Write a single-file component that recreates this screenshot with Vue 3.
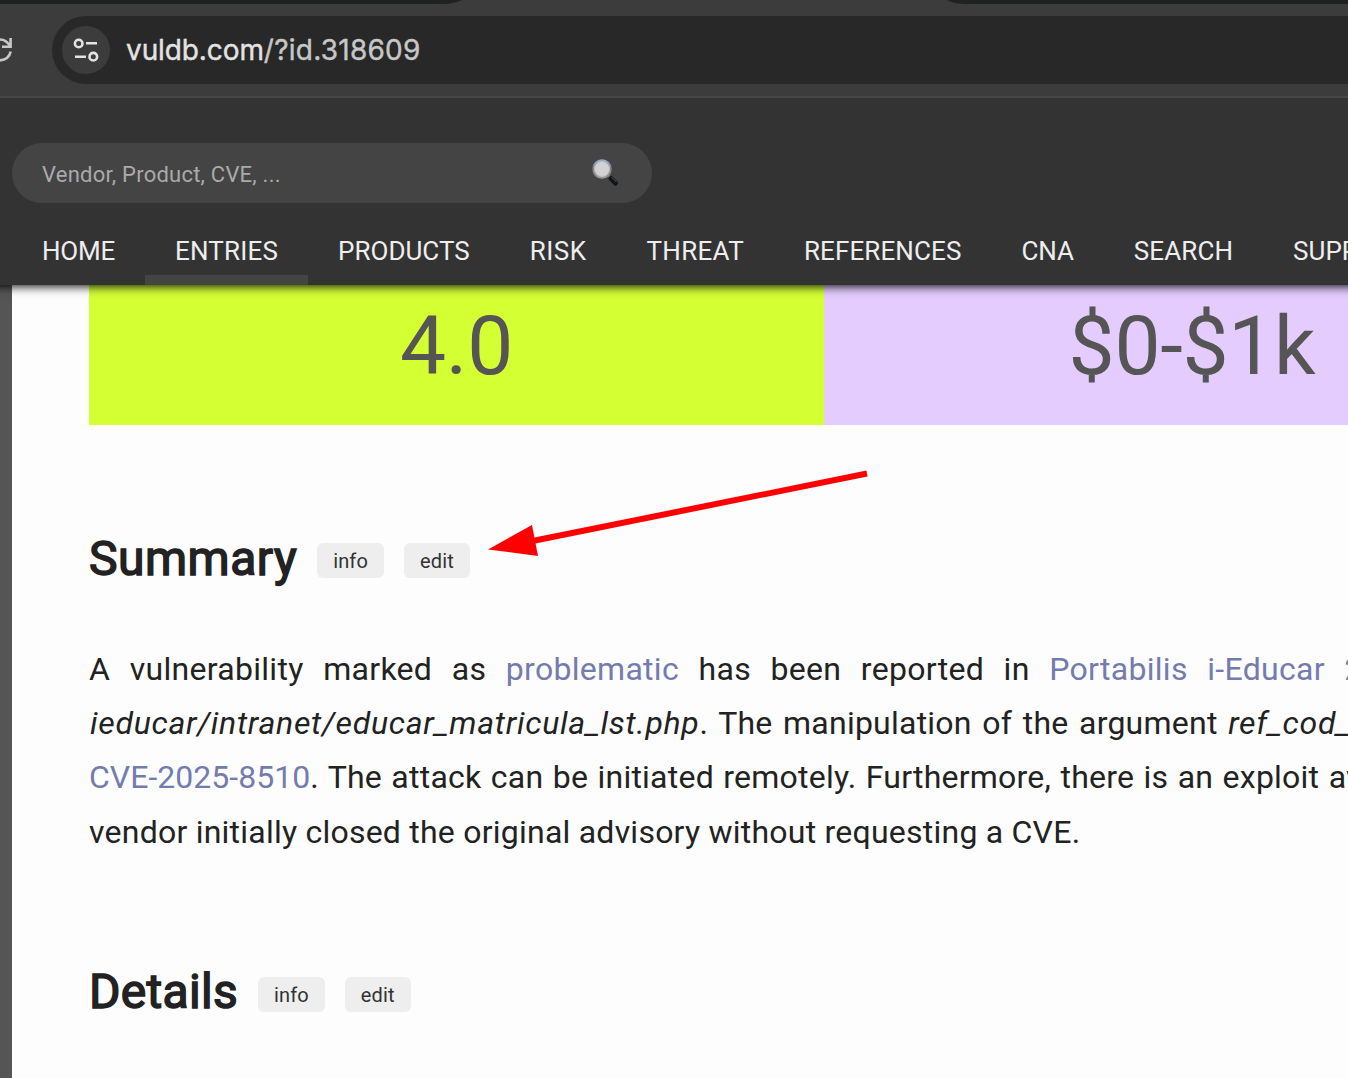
<script setup>
const nav = [
  { label: 'Home', tracking: -0.25 },
  { label: 'Entries', tracking: 0.2, active: true },
  { label: 'Products', tracking: 0 },
  { label: 'Risk', tracking: 0.5 },
  { label: 'Threat', tracking: 0.3 },
  { label: 'References', tracking: 0.1 },
  { label: 'CNA', tracking: -0.1 },
  { label: 'Search', tracking: 0.1 },
  { label: 'Supp', tracking: 0 },
]
</script>

<template>
  <div class="window">
    <div class="toolbar">
      <svg class="tabs" width="1348" height="4" viewBox="0 0 1348 4">
        <path d="M0 0H462Q454 4 442 4H0ZM947 0H1348V4H966Q954 4 947 0Z" fill="#1f2221" />
      </svg>
      <svg class="reload" width="14" height="30" viewBox="0 0 14 30" fill="none" stroke="#c7c7c7" stroke-width="2.6">
        <path d="M-2 4.7C3 3.8 7 6 10 11M10.6 3V11.8H2M10.7 16.5C9.5 22 5 25.5-2 25.5" />
      </svg>
      <div class="address">
        <div class="site">
          <svg width="26" height="24" viewBox="0 0 26 24" fill="none" stroke="#e3e3e3" stroke-width="2.6">
            <circle cx="5.7" cy="5.5" r="3.8" />
            <circle cx="20.3" cy="18.7" r="3.8" />
            <path d="M13 5.3H24M2 18.7H13" />
          </svg>
        </div>
        <div class="url">vuldb.com<span>/?id.318609</span></div>
      </div>
    </div>

    <header class="header">
      <div class="search">
        <span>Vendor, Product, CVE, ...</span>
        <svg width="28" height="30" viewBox="0 0 28 30">
          <defs>
            <linearGradient id="rim" x1="0" y1="0" x2="0" y2="1">
              <stop offset="0" stop-color="#8fb0cc" />
              <stop offset=".5" stop-color="#777e84" />
              <stop offset="1" stop-color="#989898" />
            </linearGradient>
          </defs>
          <path d="M17 18L20 21" stroke="#999" stroke-width="2" />
          <path d="M19 20.5L23.5 25" stroke="#11151a" stroke-width="5" stroke-linecap="round" />
          <path d="M19.5 19L24.5 24" stroke="#515962" stroke-width="1" />
          <circle cx="10" cy="11" r="8.8" fill="#d2d2d2" stroke="url(#rim)" stroke-width="2" />
          <circle cx="10" cy="11" r="7.4" fill="none" stroke="#c0c0c0" />
        </svg>
      </div>
      <nav class="nav">
        <a
          v-for="item in nav"
          :key="item.label"
          :class="{ active: item.active }"
          :style="{ letterSpacing: item.tracking + 'px' }"
        >{{ item.label }}</a>
      </nav>
    </header>

    <main class="page">
      <div class="scores">
        <div class="score cvss"><span>4.0</span></div>
        <div class="score price"><span>$0-$1k</span></div>
      </div>

      <section class="summary">
        <div class="title">
          <h2>Summary</h2>
          <button>info</button>
          <button>edit</button>
        </div>
        <div class="text">
          <p class="l1">A vulnerability marked as <a>problematic</a> has been reported in <a>Portabilis i-Educar 2</a></p>
          <p class="l2"><em>ieducar/intranet/educar_matricula_lst.php</em>. The manipulation of the argument <em>ref_cod_</em></p>
          <p class="l3"><a>CVE-2025-8510</a>. The attack can be initiated remotely. Furthermore, there is an exploit av</p>
          <p class="l4">vendor initially closed the original advisory without requesting a CVE.</p>
        </div>
      </section>

      <section class="details">
        <div class="title">
          <h2>Details</h2>
          <button>info</button>
          <button>edit</button>
        </div>
      </section>
    </main>

    <svg class="arrow" width="390" height="96" viewBox="484 466 390 96">
      <path d="M867 473.5L530 541.5" stroke="#f00" stroke-width="6" />
      <path d="M488 549.5L532 525L538 556Z" fill="#f00" />
    </svg>
  </div>
</template>

<style>
html, body { margin: 0; overflow: hidden; }
</style>

<style scoped>
.window {
  position: relative;
  width: 1348px;
  height: 1078px;
  overflow: hidden;
  display: flex;
  flex-direction: column;
  background: #555;
  font-family: Roboto, sans-serif;
}
.toolbar {
  position: relative;
  flex: none;
  box-sizing: border-box;
  height: 98px;
  padding-top: 16px;
  display: flex;
  align-items: flex-start;
  background: #3c3c3c;
  border-bottom: 2px solid #474747;
}
.tabs { position: absolute; top: 0; left: 0; }
.reload { flex: none; margin: 19px 38px 0 0; }
.address {
  flex: 1;
  height: 68px;
  display: flex;
  align-items: center;
  background: #282828;
  border-radius: 34px 0 0 34px;
}
.site {
  width: 48px;
  height: 48px;
  margin: 0 16px 0 10px;
  display: flex;
  align-items: center;
  justify-content: center;
  background: #3c3c3c;
  border-radius: 50%;
}
.url {
  font-family: Inter, sans-serif;
  font-size: 28px;
  line-height: 68px;
  color: #e3e3e3;
  white-space: nowrap;
  letter-spacing: -0.1px;
  -webkit-text-stroke: 0.4px currentColor;
}
.url span { color: #c7c7c7; letter-spacing: 0.25px; }
.header {
  position: relative;
  z-index: 1;
  flex: none;
  height: 187px;
  margin: 0 -20px;
  padding: 0 20px;
  background: #333;
  box-shadow: 0 1px 10px #000;
  clip-path: inset(0 0 -20px 0);
}
.search {
  box-sizing: border-box;
  width: 640px;
  height: 60px;
  margin: 45px 0 0 12px;
  padding: 0 32px 0 30px;
  display: flex;
  align-items: center;
  justify-content: space-between;
  background: #444;
  border-radius: 30px;
  color: #aaa;
  font-size: 22px;
  letter-spacing: 0.23px;
}
.search span { padding-top: 2px; }
.nav {
  display: flex;
  margin-left: 12px;
  padding-top: 12px;
}
.nav a {
  flex: none;
  height: 60px;
  padding: 0 30px;
  border-bottom: 10px solid transparent;
  color: #eee;
  font-size: 26px;
  line-height: 72px;
  text-transform: uppercase;
}
.nav a.active { border-color: #444; }
.page {
  flex: 1;
  margin-left: 12px;
  padding-left: 77px;
  background: #fdfdfd;
  overflow: hidden;
}
.scores { display: flex; height: 140px; }
.score {
  box-sizing: border-box;
  flex: none;
  width: 735px;
  text-align: center;
  color: #555;
  font-size: 82px;
  line-height: 122px;
  letter-spacing: -0.3px;
}
.cvss { background: #d3ff33; }
.price { padding-left: 1px; background: #e4ccff; }
.summary { padding-top: 99px; }
.details { padding-top: 98px; }
.title { display: flex; align-items: center; height: 70px; }
h2 {
  margin: 0 20px 0 0;
  color: #222;
  font-size: 48px;
  font-weight: 400;
  line-height: 70px;
  letter-spacing: 0.5px;
  -webkit-text-stroke: 1.5px #222;
}
.details h2 { letter-spacing: 0.3px; }
button {
  height: 35px;
  margin: 2px 20px 0 0;
  padding: 2px 16px 0;
  border: 0;
  border-radius: 6px;
  background: #eee;
  color: #333;
  font-family: Roboto, sans-serif;
  font-size: 20px;
  letter-spacing: 0.15px;
}
.details button { margin-top: 4px; }
.text { padding-top: 47.6px; }
p {
  margin: 0;
  color: #222;
  font-size: 32px;
  line-height: 54.4px;
  letter-spacing: 0.23px;
  white-space: nowrap;
}
p a { color: #747cad; }
.l1 { word-spacing: 11.35px; letter-spacing: 0.29px; }
.l2 { padding-left: 1px; word-spacing: 2.4px; }
.l2 em { letter-spacing: 0.72px; }
.l3 { word-spacing: 1.2px; }
.l3 a { letter-spacing: 0.02px; }
.arrow { position: absolute; left: 484px; top: 466px; z-index: 2; }
</style>
